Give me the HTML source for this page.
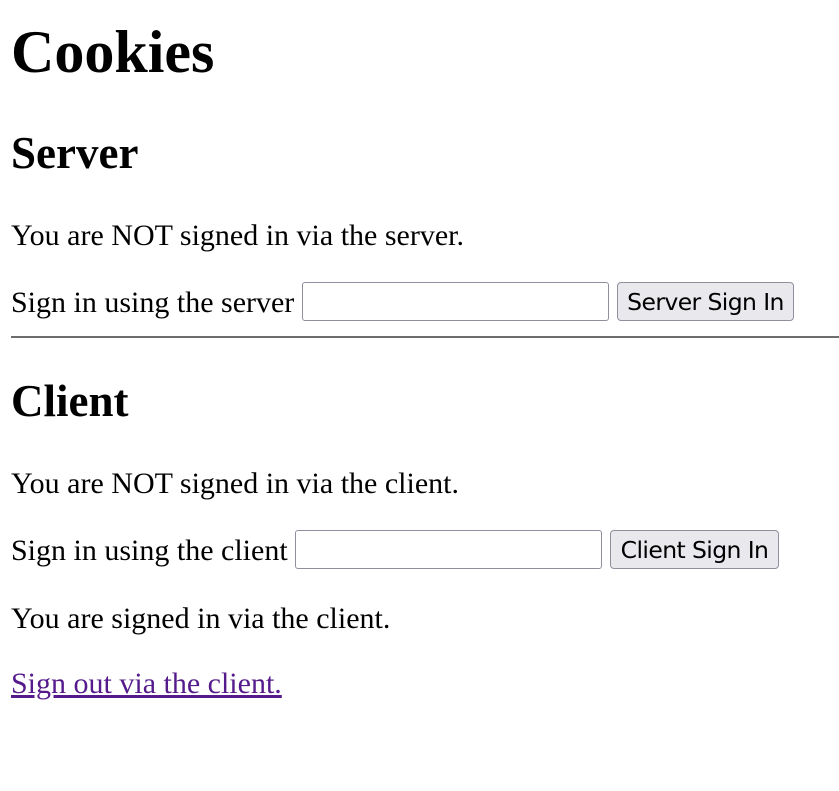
<!DOCTYPE html>
<html><head><style>
html,body{margin:0;padding:0;background:#fff;width:839px;height:791px;overflow:hidden}
body{font-family:"Liberation Serif",serif;color:#000;position:relative}
.t{position:absolute;left:11px;white-space:nowrap;line-height:1}
.in{position:absolute;height:37px;border:1px solid #8f8f9d;border-radius:3px;background:#fff;box-sizing:border-box}
.bt{position:absolute;height:39px;border:1px solid #8f8f9d;border-radius:4px;background:#e9e9ed;box-sizing:border-box;font-family:"DejaVu Sans","Liberation Sans",sans-serif;font-size:23.5px;line-height:39px;text-align:center;letter-spacing:-0.6px}
a{color:#551a8b}
</style></head><body>
<div class="t" style="top:22px;font-size:60px;font-weight:bold">Cookies</div>
<div class="t" style="top:131px;font-size:45px;font-weight:bold">Server</div>
<div class="t" style="top:221px;font-size:30px">You are NOT signed in via the server.</div>
<div class="t" style="top:288px;font-size:30px">Sign in using the server</div>
<div class="in" style="left:302px;top:282px;width:307px;height:39px"></div>
<div class="bt" style="left:617px;top:282px;width:177px">Server Sign In</div>
<div style="position:absolute;left:11px;top:336px;width:828px;height:0;border-top:2px solid #6d6d6d"></div>
<div class="t" style="top:379px;font-size:45px;font-weight:bold">Client</div>
<div class="t" style="top:469px;font-size:30px">You are NOT signed in via the client.</div>
<div class="t" style="top:536px;font-size:30px">Sign in using the client</div>
<div class="in" style="left:295px;top:530px;width:307px;height:39px"></div>
<div class="bt" style="left:610px;top:530px;width:169px">Client Sign In</div>
<div class="t" style="top:604px;font-size:30px">You are signed in via the client.</div>
<div class="t" style="top:669px;font-size:30px"><a href="#">Sign out via the client.</a></div>
</body></html>
